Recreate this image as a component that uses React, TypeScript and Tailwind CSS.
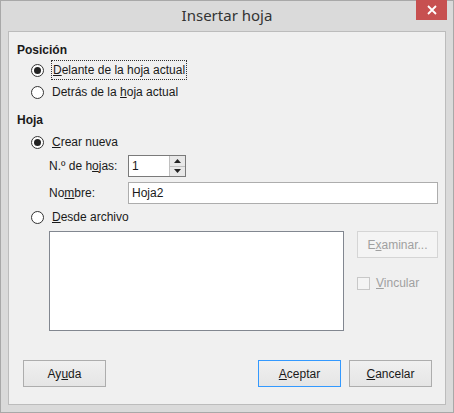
import React from "react";

const Radio = ({ checked }: { checked?: boolean }) => (
  <span className="w-[13px] h-[13px] rounded-full border border-[#333] bg-white flex items-center justify-center shrink-0">
    {checked && <span className="w-[7px] h-[7px] rounded-full bg-[#222]" />}
  </span>
);

const Btn = ({ children, blue }: { children: React.ReactNode; blue?: boolean }) => (
  <div className={`w-[83px] h-[27px] flex items-center justify-center bg-gradient-to-b from-[#f0f0f0] to-[#e5e5e5] border ${blue ? "border-[#3399ff]" : "border-[#adadad]"}`}>
    {children}
  </div>
);

export default function App() {
  return (
    <div className="w-[454px] h-[413px] bg-[#dadada] border border-[#a8a8a8] flex flex-col text-[12px] text-[#1a1a1a]" style={{ fontFamily: '"Liberation Sans", Arial, sans-serif' }}>
      <div className="h-[30px] relative flex items-center justify-center">
        <span className="text-[15px] text-[#333] mt-[-2px]" style={{ fontFamily: '"Noto Sans", sans-serif' }}>Insertar hoja</span>
        <div className="absolute right-[6px] top-[-1px] w-[31px] h-[20px] bg-[#c75050] flex items-center justify-center">
          <svg width="10" height="10" viewBox="0 0 10 10"><path d="M1 1L9 9M9 1L1 9" stroke="white" strokeWidth="1.8" /></svg>
        </div>
      </div>
      <div className="mx-[7px] h-[374px] bg-[#f0f0f0] border border-[#bcbcbc] flex flex-col pl-[8px] pr-[7px]">
        <div className="font-bold mt-[9px] h-[16px]">Posición</div>
        <div className="flex items-center gap-[7px] ml-[14px] mt-[4px] h-[18px]">
          <Radio checked />
          <span className="border border-dotted border-[#333] px-[1px]"><u>D</u>elante de la hoja actual</span>
        </div>
        <div className="flex items-center gap-[7px] ml-[14px] mt-[4px] h-[18px]">
          <Radio />
          <span className="px-[1px]">Detrás de la <u>h</u>oja actual</span>
        </div>
        <div className="font-bold mt-[10px] h-[16px]">Hoja</div>
        <div className="flex items-center gap-[7px] ml-[14px] mt-[6px] h-[18px]">
          <Radio checked />
          <span className="px-[1px]"><u>C</u>rear nueva</span>
        </div>
        <div className="flex items-center ml-[32px] mt-[4px] h-[22px]">
          <span className="w-[79px]">N.º de h<u>o</u>jas:</span>
          <div className="w-[58px] h-[22px] bg-white border border-[#7a7a7a] flex">
            <span className="flex-1 pl-[3px] leading-[20px]">1</span>
            <div className="w-[16px] flex flex-col border-l border-[#c0c0c0]">
              <div className="flex-1 bg-[#e8e8e8] border-b border-[#c0c0c0] flex items-center justify-center"><svg width="7" height="4"><path d="M0 4L3.5 0L7 4Z" fill="#222" /></svg></div>
              <div className="flex-1 bg-[#e8e8e8] flex items-center justify-center"><svg width="7" height="4"><path d="M0 0L3.5 4L7 0Z" fill="#222" /></svg></div>
            </div>
          </div>
        </div>
        <div className="flex items-center ml-[32px] mt-[5px] h-[22px]">
          <span className="w-[79px]">No<u>m</u>bre:</span>
          <div className="flex-1 h-[22px] bg-white border border-[#adadad] pl-[3px] leading-[20px]">Hoja2</div>
        </div>
        <div className="flex items-center gap-[7px] ml-[14px] mt-[4px] h-[18px]">
          <Radio />
          <span className="px-[1px]"><u>D</u>esde archivo</span>
        </div>
        <div className="flex ml-[32px] mt-[5px] gap-[13px]">
          <div className="w-[304px] h-[100px] bg-white border border-[#828790]" />
          <div className="flex flex-col">
            <div className="w-[81px] h-[27px] border border-[#d5d5d5] bg-[#f4f4f4] text-[#a0a0a0] flex items-center justify-center">E<u>x</u>aminar...</div>
            <div className="flex items-center gap-[6px] mt-[16px]">
              <span className="w-[13px] h-[13px] border border-[#c8c8c8] bg-[#f4f4f4]" />
              <span className="text-[#a0a0a0]"><u>V</u>incular</span>
            </div>
          </div>
        </div>
        <div className="flex mt-[29px] ml-[6px] mr-[6px]">
          <Btn>Ay<u>u</u>da</Btn>
          <div className="flex-1" />
          <Btn blue><u>A</u>ceptar</Btn>
          <div className="w-[8px]" />
          <Btn><u>C</u>ancelar</Btn>
        </div>
      </div>
    </div>
  );
}
